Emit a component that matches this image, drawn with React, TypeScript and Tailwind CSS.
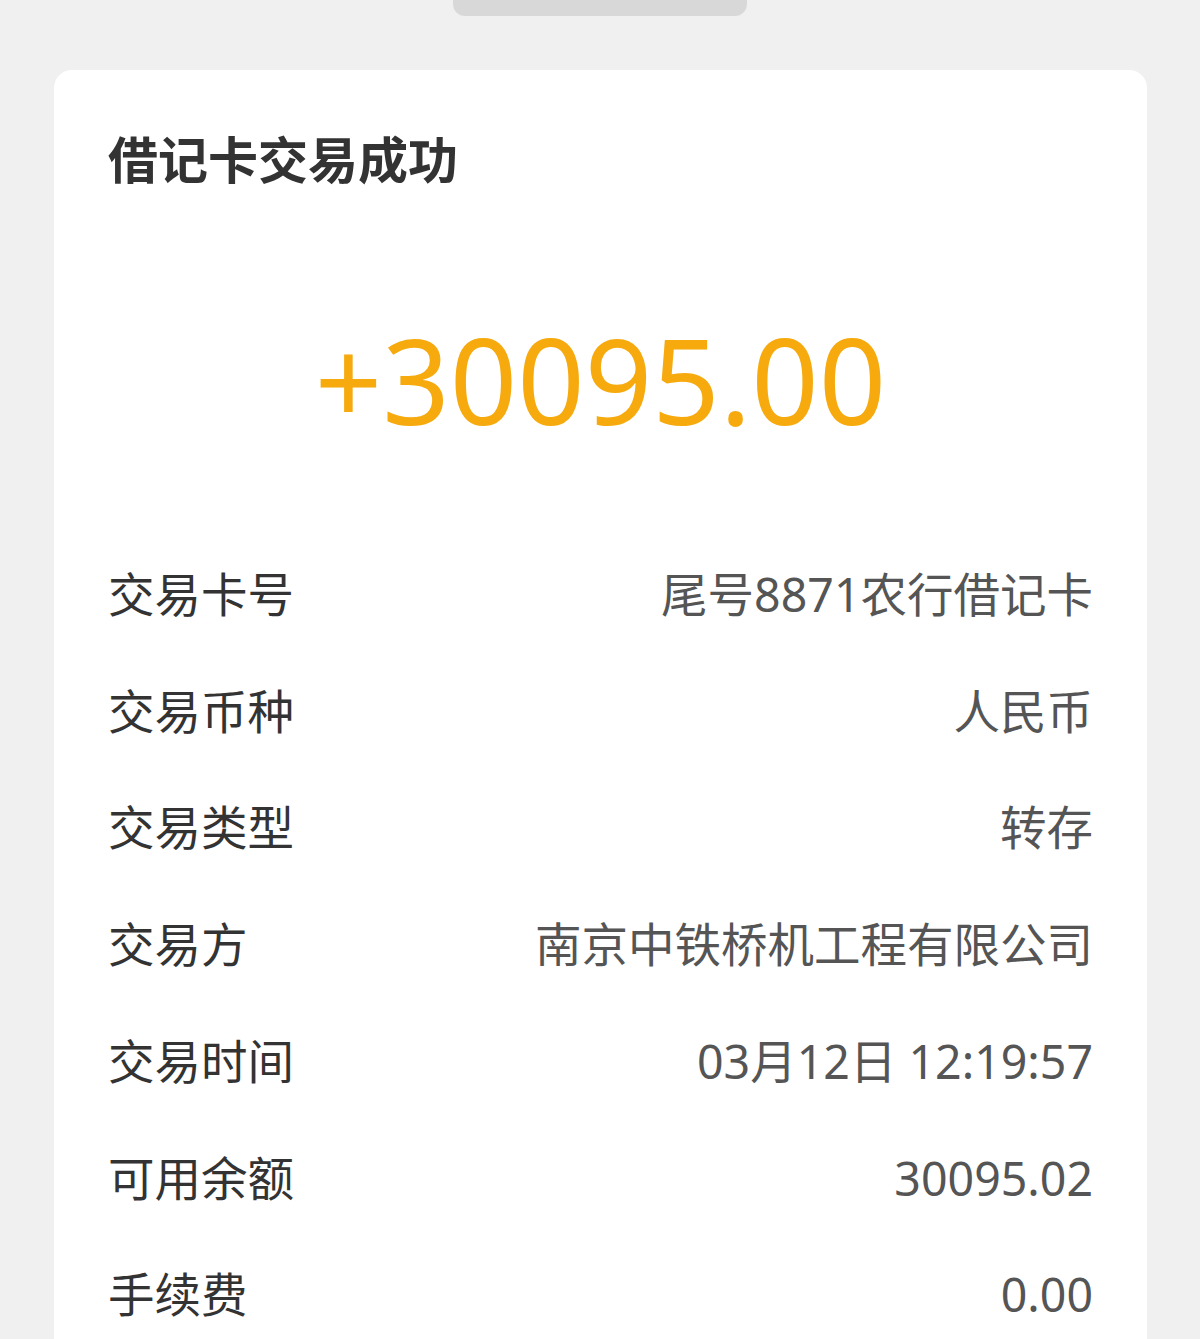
import React from "react";

const rows: [string, string][] = [
  ["交易卡号", "尾号8871农行借记卡"],
  ["交易币种", "人民币"],
  ["交易类型", "转存"],
  ["交易方", "南京中铁桥机工程有限公司"],
  ["交易时间", "03月12日 12:19:57"],
  ["可用余额", "30095.02"],
  ["手续费", "0.00"],
];

export default function App() {
  return (
    <div
      className="h-[1339px] w-[1200px] overflow-hidden bg-[#f0f0f0]"
      style={{ fontFamily: '"Noto Sans", "Noto Sans CJK SC", sans-serif' }}
    >
      <div className="flex justify-center">
        <div className="h-[16px] w-[294px] rounded-b-[12px] bg-[#d8d8d8]" />
      </div>
      <div className="ml-[54px] mt-[54px] h-[1400px] w-[1093px] rounded-[18px] bg-white px-[54px]">
        <div className="pt-[65px] text-[50px] font-bold leading-[50px] text-[#333333]">
          借记卡交易成功
        </div>
        <div className="mt-[136px] text-center text-[118px] leading-[118px] text-[#f6aa0e]">
          +30095.00
        </div>
        <div className="mt-[97px] flex flex-col">
          {rows.map(([k, v]) => (
            <div key={k} className="flex h-[116.7px] items-center justify-between text-[46.5px] leading-none">
              <span className="text-[#333333]">{k}</span>
              <span className="text-[#555555]">{v}</span>
            </div>
          ))}
        </div>
      </div>
    </div>
  );
}
